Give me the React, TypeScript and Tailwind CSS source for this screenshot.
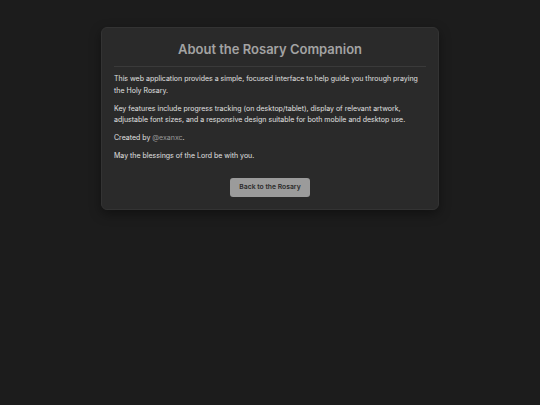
import React from "react";

export default function App() {
  return (
    <div
      className="min-h-[405px] w-full bg-[#1c1c1c] pt-[27px]"
      style={{ fontFamily: "Inter, 'Noto Sans', sans-serif" }}
    >
      <div className="mx-auto w-[338px] rounded-md border border-[#333] bg-[#2a2a2a] px-3 pt-3 pb-3 shadow-[0_4px_12px_rgba(0,0,0,0.4)]">
        <h1 className="text-center text-[13px] font-semibold leading-[18px] text-[#a3a3a3]">
          About the Rosary Companion
        </h1>
        <div className="mt-[8px] h-px bg-[#3a3a3a]" />
        <div className="mt-[6px] flex flex-col gap-[6.5px] text-[7px] leading-[11.5px] text-[#e0e0e0]">
          <p>
            This web application provides a simple, focused interface to help
            guide you through praying the Holy Rosary.
          </p>
          <p>
            Key features include progress tracking (on desktop/tablet), display
            of relevant artwork, adjustable font sizes, and a responsive design
            suitable for both mobile and desktop use.
          </p>
          <p>
            Created by <span className="text-[#9a9a9a]">@exanxc</span>.
          </p>
          <p>May the blessings of the Lord be with you.</p>
        </div>
        <div className="mt-[16px] flex justify-center">
          <button className="h-[19px] rounded-[3px] bg-[#9b9b9b] px-[9px] text-[6.8px] font-semibold text-[#2a2a2a]">
            Back to the Rosary
          </button>
        </div>
      </div>
    </div>
  );
}
